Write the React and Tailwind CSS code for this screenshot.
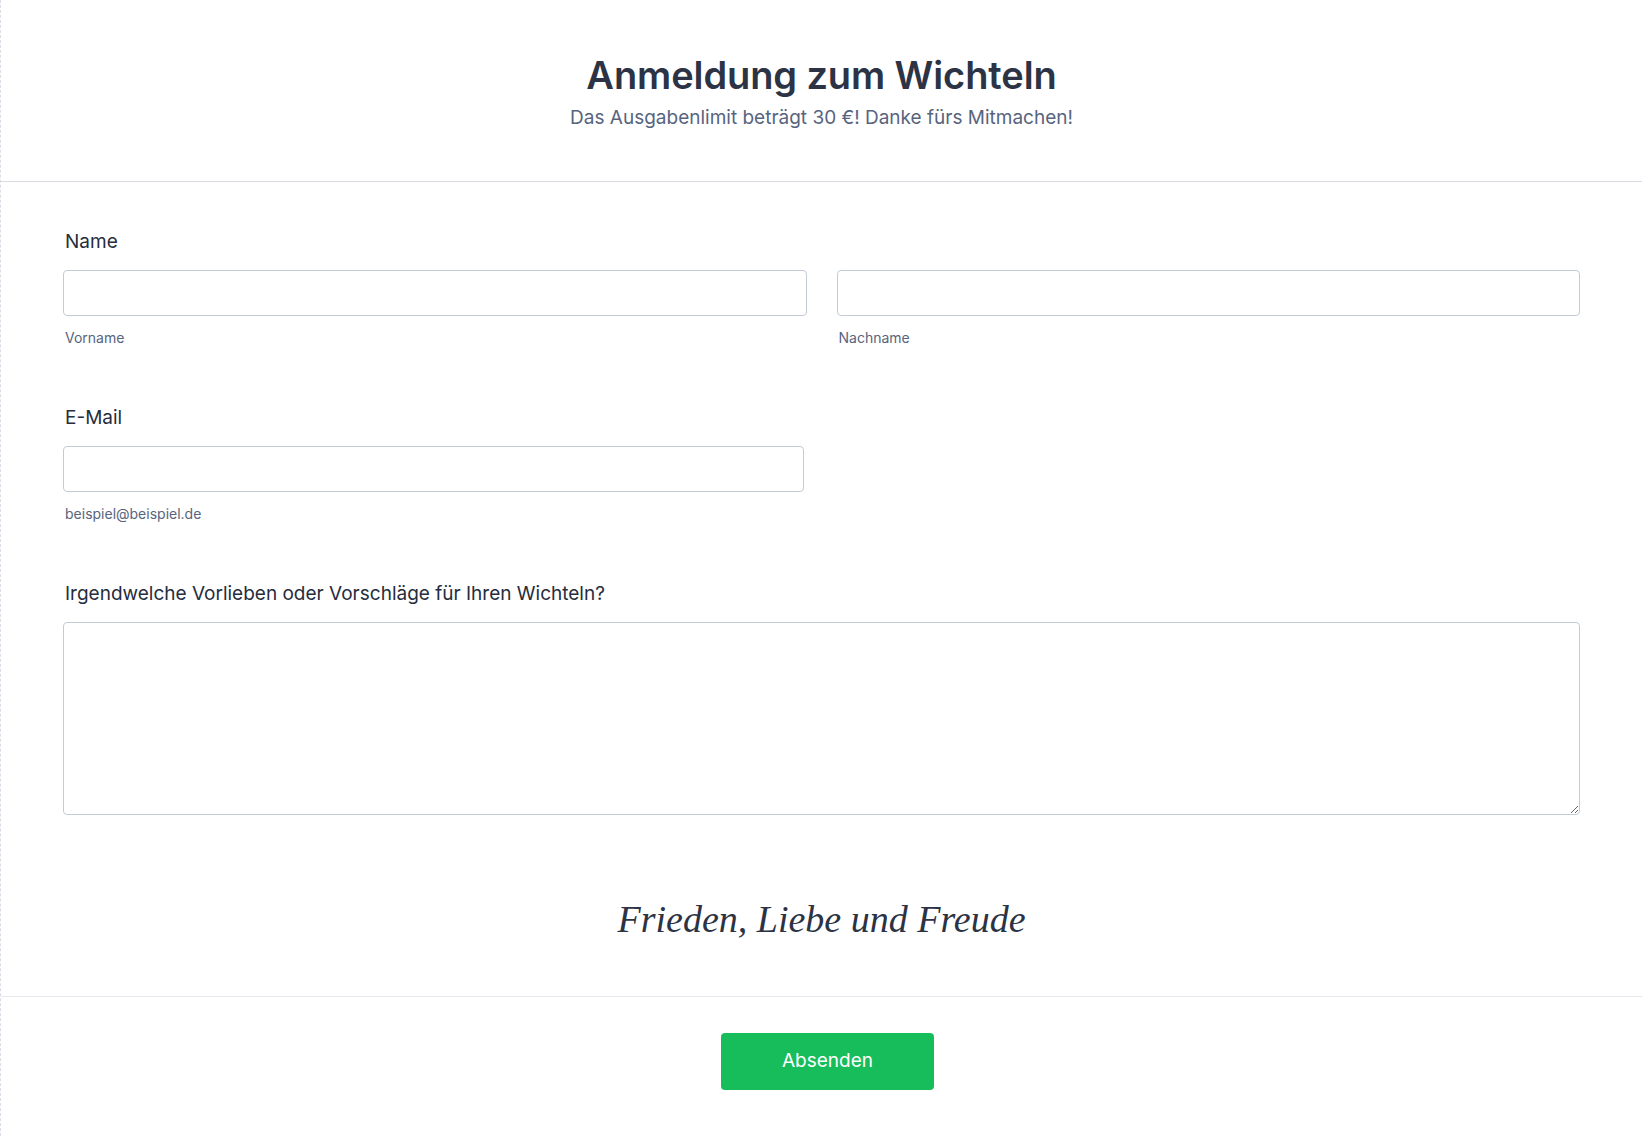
import React from 'react';

const inputCls =
  'block w-full h-[46px] rounded-[4px] border border-[#c3cad8] bg-white px-3 text-[16px] text-[#2c3345] outline-none';

function Field({ sub }) {
  return (
    <div>
      <input type="text" className={inputCls} />
      <div className="mt-[12px] pl-[2px] text-[14px] leading-[20px] text-[#57647e]">{sub}</div>
    </div>
  );
}

export default function App() {
  return (
    <div
      className="min-h-[1136px] bg-white border-l border-dashed border-[#dcdce6] text-[#2c3345]"
      style={{ fontFamily: 'Inter, "Noto Sans", sans-serif' }}
    >
      {/* header */}
      <header className="pt-[52px] pb-[49px] text-center border-b border-[#d8dbe3]">
        <h1 className="text-[38px] leading-[46px] font-semibold tracking-[-0.1px] text-[#2c3345]">
          Anmeldung zum Wichteln
        </h1>
        <p className="mt-[6px] text-[19px] leading-[28px] text-[#57647e]">
          Das Ausgabenlimit beträgt 30 €! Danke fürs Mitmachen!
        </p>
      </header>

      {/* form */}
      <form className="px-[62px] pt-[48px]" onSubmit={(e) => e.preventDefault()}>
        <label className="block pl-[2px] text-[19px] leading-[24px] text-[#262d3d]">Name</label>
        <div className="mt-[16px] grid grid-cols-2 gap-[30px]">
          <Field sub="Vorname" />
          <Field sub="Nachname" />
        </div>

        <label className="mt-[58px] block pl-[2px] text-[19px] leading-[24px] text-[#262d3d]">E-Mail</label>
        <div className="mt-[16px] w-[741px]">
          <Field sub="beispiel@beispiel.de" />
        </div>

        <label className="mt-[58px] block pl-[2px] text-[19px] leading-[24px] text-[#262d3d]">
          Irgendwelche Vorlieben oder Vorschläge für Ihren Wichteln?
        </label>
        <textarea className="mt-[16px] block w-full h-[193px] rounded-[4px] border border-[#c3cad8] bg-white p-3 text-[16px] outline-none" />

        <p
          className="mt-[80px] pb-[53px] text-center text-[38px] leading-[48px] italic text-[#2c3345]"
          style={{ fontFamily: '"Liberation Serif", "Times New Roman", serif' }}
        >
          Frieden, Liebe und Freude
        </p>
      </form>

      <div className="border-t border-[#e6e8ee] pt-[36px] pb-[46px] flex justify-center">
        <button
          type="button"
          className="ml-[12px] w-[213px] h-[57px] rounded-[4px] bg-[#18bd5b] text-white text-[19px]"
        >
          Absenden
        </button>
      </div>
    </div>
  );
}
